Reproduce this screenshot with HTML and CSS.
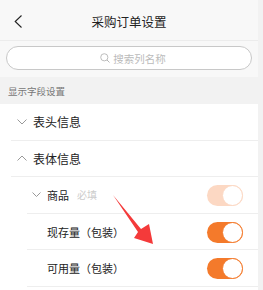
FILE: index.html
```html
<!DOCTYPE html>
<html lang="zh">
<head>
<meta charset="utf-8">
<link rel="stylesheet" href="styles.css">
</head>
<body>
<div class="page">
  <div class="main">
    <header class="nav">
      <svg class="back" width="9" height="13" viewBox="0 0 9 13"><path d="M7.5 0.5 L1.2 6.5 L7.5 12.5" fill="none" stroke="#222" stroke-width="1.1"/></svg>
      <div class="title">采购订单设置</div>
    </header>
    <div class="search-wrap">
      <div class="search">
        <svg width="10" height="10" viewBox="0 0 10 10"><circle cx="4.3" cy="4.3" r="3.6" fill="none" stroke="#b5b5b5" stroke-width="0.9"/><path d="M7 7 L9.5 9.5" stroke="#b5b5b5" stroke-width="1"/></svg>
        <span>搜索列名称</span>
      </div>
    </div>
    <div class="section">显示字段设置</div>
    <div class="list">
      <div class="row lvl1">
        <svg class="chev" width="10" height="6" viewBox="0 0 10 6"><path d="M0.5 0.5 L5 5 L9.5 0.5" fill="none" stroke="#999" stroke-width="1"/></svg>
        <span class="label">表头信息</span>
      </div>
      <div class="row lvl1">
        <svg class="chev" width="10" height="6" viewBox="0 0 10 6"><path d="M0.5 5.5 L5 1 L9.5 5.5" fill="none" stroke="#999" stroke-width="1"/></svg>
        <span class="label">表体信息</span>
      </div>
      <div class="row lvl2">
        <svg class="chev" width="9" height="5" viewBox="0 0 9 5"><path d="M0.5 0.5 L4.5 4.5 L8.5 0.5" fill="none" stroke="#999" stroke-width="1"/></svg>
        <span class="label">商品</span><span class="req">必填</span>
        <span class="toggle faded"><span class="knob"></span></span>
      </div>
      <div class="row lvl3">
        <span class="label">现存量（包装）</span>
        <span class="toggle"><span class="knob"></span></span>
      </div>
      <div class="row lvl3">
        <span class="label">可用量（包装）</span>
        <span class="toggle"><span class="knob"></span></span>
      </div>
    </div>
  </div>
  <div class="scroll"></div>
  <svg class="arrow" width="263" height="290" viewBox="0 0 263 290"><polygon points="113,195 141,229 149,224 153,244 134,238 138,232" fill="#f43a3a"/></svg>
</div>
</body>
</html>
```
FILE: styles.css
```css
* { box-sizing: border-box; }
html, body { margin: 0; padding: 0; }
body {
  font-family: "Noto Sans CJK SC", "Noto Sans", sans-serif;
  color: #222;
  background: #fff;
}
.page {
  position: relative;
  display: flex;
  width: 263px;
  height: 290px;
  overflow: hidden;
}
.main {
  flex: 1;
  min-width: 0;
}
.scroll {
  width: 5px;
  background: #f2f2f2;
}
.nav {
  height: 41px;
  background: #f8f8f8;
  border-bottom: 1px solid #ececec;
  display: flex;
  align-items: center;
  justify-content: center;
  position: relative;
  padding-top: 2px;
}
.back {
  position: absolute;
  left: 14px;
  top: 15px;
}
.title {
  font-size: 12.5px;
  color: #222;
  margin-left: 0;
}
.search-wrap {
  background: #f8f8f8;
  padding: 5px 6px 8px 6px;
  height: 36px;
}
.search {
  height: 24px;
  background: #fff;
  border: 1px solid #c8c8c8;
  border-radius: 12px;
  display: flex;
  align-items: center;
  justify-content: center;
  gap: 3px;
  font-size: 10.5px;
  color: #bbb;
  padding-left: 8px;
}
.section {
  height: 27px;
  background: #f2f2f2;
  font-size: 9.5px;
  color: #777;
  padding-left: 8px;
  display: flex;
  align-items: center;
}
.row {
  height: 36.6px;
  display: flex;
  align-items: center;
  border-bottom: 1px solid #eeeeee;
  position: relative;
}
.row .label { font-size: 11px; color: #222; }
.lvl1 { margin-left: 11px; padding-left: 6px; }
.lvl1 .label { font-size: 12px; }
.lvl1 .chev { margin-right: 6px; }
.lvl2 { margin-left: 27px; padding-left: 5px; }
.lvl2 .chev { margin-right: 6px; }
.lvl3 { margin-left: 27px; padding-left: 20px; }
.req { font-size: 10px; color: #cccccc; margin-left: 8px; }
.toggle {
  position: absolute;
  right: 15px;
  top: 8px;
  width: 36px;
  height: 21px;
  border-radius: 11px;
  background: #f47a2b;
}
.toggle.faded { background: #fcd8c3; }
.knob {
  position: absolute;
  right: 0;
  top: 0;
  width: 21px;
  height: 21px;
  border-radius: 50%;
  background: #fff;
  border: 1px solid #f47a2b;
}
.faded .knob { border-color: #fcd8c3; }
.arrow {
  position: absolute;
  left: 0;
  top: 0;
  pointer-events: none;
}
```
